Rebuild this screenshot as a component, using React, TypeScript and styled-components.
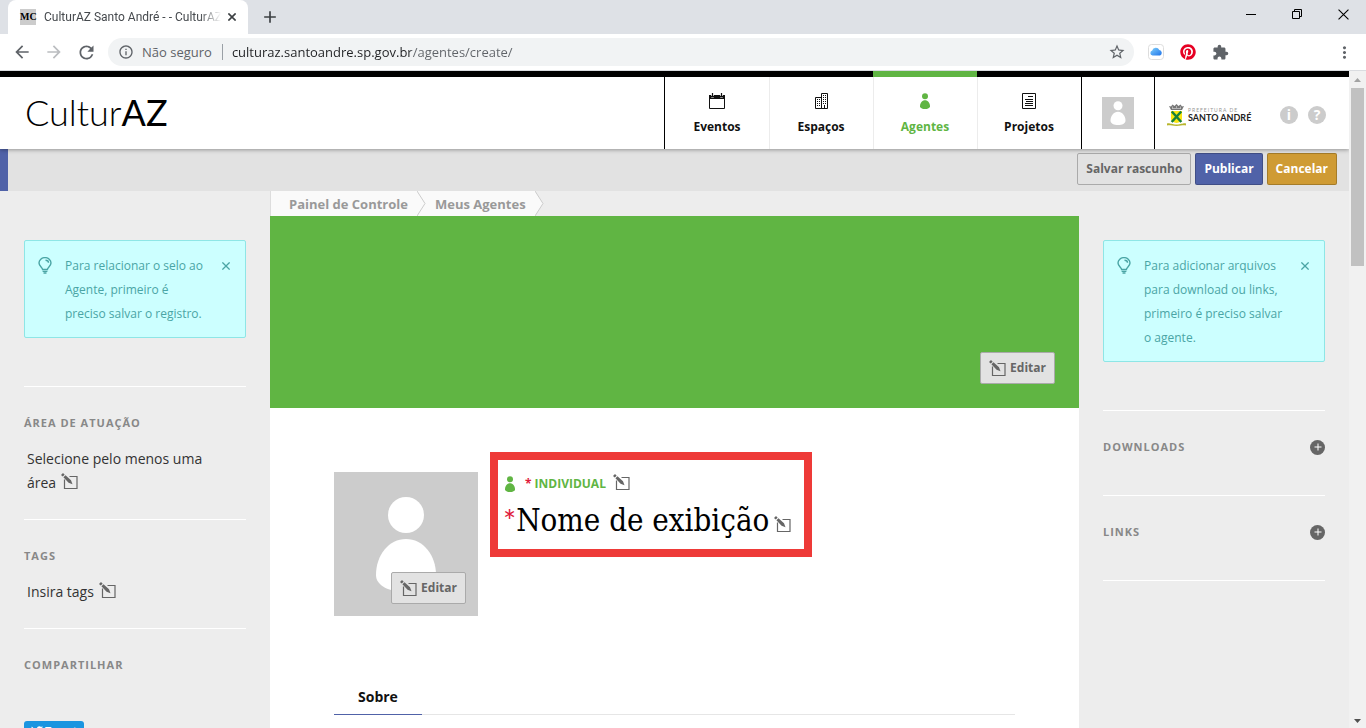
import React from "react";
import styled, { createGlobalStyle } from "styled-components";
import {
  MdArrowBack,
  MdArrowForward,
  MdRefresh,
  MdInfoOutline,
  MdStarBorder,
  MdExtension,
  MdMoreVert,
  MdAdd,
} from "react-icons/md";
import { FaPinterest, FaTwitter } from "react-icons/fa";

const GlobalStyle = createGlobalStyle`
  *, *::before, *::after { box-sizing: border-box; }
  body { margin: 0; background: #ededed; font-family: "Open Sans", sans-serif; font-size: 14px; line-height: 24px; color: #333; }
  h1, h2, p { margin: 0; font-weight: inherit; }
  button, input { font: inherit; color: inherit; margin: 0; padding: 0; border: 0; background: none; }
  a { color: inherit; text-decoration: none; }
  svg { display: block; flex: none; }
`;

/* ---------- browser window ---------- */

const Window = styled.div`
  display: flex;
  flex-direction: column;
  height: 100vh;
  overflow: hidden;
`;

const TabStrip = styled.div`
  display: flex;
  align-items: stretch;
  flex: none;
  height: 34px;
  padding-left: 8px;
  background: #dee1e6;
`;

const BrowserTab = styled.div`
  display: flex;
  align-items: center;
  width: 240px;
  padding: 0 5px 0 12px;
  border-radius: 8px 8px 0 0;
  background: #fff;
  color: #45494d;
  font-family: Roboto, sans-serif;
  font-size: 12px;
`;

const Favicon = styled.span`
  width: 16px;
  margin-right: 8px;
  background: #ccc;
  color: #000;
  font: bold 10px/16px "Liberation Serif", serif;
  text-align: center;
`;

const TabTitle = styled.span`
  flex: 1;
  min-width: 0;
  overflow: hidden;
  white-space: nowrap;
  mask-image: linear-gradient(to right, #000 88%, transparent);
`;

const IconButton = styled.button<{ $w?: number; $color?: string }>`
  display: flex;
  align-items: center;
  justify-content: center;
  flex: none;
  width: ${(p) => p.$w ?? 32}px;
  color: ${(p) => p.$color ?? "#5f6368"};
`;

const MenuButton = styled(IconButton)`
  margin-left: 92px;
`;

const WindowButtons = styled.div`
  display: flex;
  margin-left: auto;
  padding-bottom: 6px;
`;

const Toolbar = styled.div`
  display: flex;
  align-items: center;
  flex: none;
  height: 37px;
  padding: 0 6px;
  border-bottom: 1px solid #dadce0;
  background: #fff;
`;

const AddressBar = styled.div`
  display: flex;
  align-items: center;
  flex: 1;
  height: 28px;
  margin: 0 6px;
  padding: 0 8px 0 10px;
  border-radius: 14px;
  background: #f1f3f4;
  color: #5f6368;
`;

const Insecure = styled.span`
  margin: 0 9px 0 8px;
  padding-right: 10px;
  border-right: 1px solid #9aa0a6;
  font-size: 13px;
  line-height: 16px;
`;

const AddressInput = styled.input`
  flex: 1;
  min-width: 0;
  outline: none;
  background: linear-gradient(to right, #202124 179px, #5f6368 179px);
  background-clip: text;
  -webkit-text-fill-color: transparent;
  font-size: 13px;
`;

const Viewport = styled.div`
  display: flex;
  flex: 1;
  min-height: 0;
`;

const Page = styled.div`
  display: flex;
  flex-direction: column;
  flex: 1;
  min-width: 0;
  overflow: hidden;
`;

const Scrollbar = styled.div`
  display: flex;
  flex-direction: column;
  align-items: center;
  flex: none;
  width: 17px;
  padding: 7px 0 5px;
  background: #f1f1f1;
`;

const Thumb = styled.div`
  width: 13px;
  height: 178px;
  margin: 6px 0 auto;
  background: #c1c1c1;
`;

/* ---------- site header ---------- */

const Header = styled.header`
  display: flex;
  flex: none;
  height: 78px;
  border-top: 6px solid #000;
  background: #fff;
  box-shadow: 0 1px 4px rgba(0, 0, 0, 0.35);
  position: relative;
`;

const SiteLogo = styled.a`
  padding-left: 25px;
  color: #000;
  font: 300 36px/70px Lato, sans-serif;
  b { font-weight: 400; }
`;

const Nav = styled.nav`
  display: flex;
  margin-left: auto;
  border-left: 1px solid #000;
`;

const NavItem = styled.a<{ $active?: boolean }>`
  display: flex;
  flex-direction: column;
  align-items: center;
  width: 104px;
  margin-top: -6px;
  padding-top: 16px;
  border-top: 6px solid ${(p) => (p.$active ? "#60b543" : "#000")};
  color: ${(p) => (p.$active ? "#60b543" : "#111")};
  font-size: 12px;
  font-weight: 700;
  & + & { box-shadow: inset 1px 0 #ececec; }
  svg { margin-bottom: 6px; }
`;

const UserCell = styled.a`
  display: flex;
  align-items: center;
  justify-content: center;
  width: 74px;
  border: solid #000;
  border-width: 0 1px;
`;

const UserPicture = styled.span`
  padding: 4px;
  background: #ccc;
  color: #fff;
`;

const Partner = styled.div`
  display: flex;
  align-items: center;
  width: 194px;
  padding: 3px 23px 0 12px;
`;

const CityName = styled.a`
  flex: 1;
  margin-left: 2px;
  color: #222;
  font: 700 9px/10px Lato, sans-serif;
  white-space: nowrap;
  small {
    display: block;
    color: #999;
    font-size: 5px;
    font-weight: 400;
    line-height: 6px;
    letter-spacing: 1px;
  }
`;

const HelpDot = styled.button`
  width: 18px;
  height: 18px;
  margin-left: 10px;
  border-radius: 50%;
  background: #ccc;
  color: #fff;
  font-size: 14px;
  font-weight: 700;
  line-height: 18px;
`;

const ActionBar = styled.div`
  display: flex;
  justify-content: flex-end;
  gap: 4px;
  flex: none;
  height: 42px;
  padding: 4px 12px 0 0;
  border-left: 8px solid #5062a8;
  background: #e2e2e2;
`;

const Button = styled.button<{ $kind?: "primary" | "warning" }>`
  display: flex;
  align-items: center;
  gap: 4px;
  height: 32px;
  padding: 0 8px;
  border: 1px solid ${(p) => (p.$kind ? "rgba(0, 0, 0, 0.2)" : "#aaa")};
  border-radius: 2px;
  background: ${(p) =>
    p.$kind === "primary" ? "#5062a8" : p.$kind === "warning" ? "#cf9b34" : "#e2e2e2"};
  color: ${(p) => (p.$kind ? "#fff" : "#666")};
  font-size: 12px;
  font-weight: 700;
  white-space: nowrap;
`;

/* ---------- page body ---------- */

const Columns = styled.div`
  display: grid;
  grid-template-columns: 270px minmax(0, 1fr) 270px;
  flex: 1;
  min-height: 0;
`;

const Sidebar = styled.aside`
  padding: 49px 24px 0;
`;

const Alert = styled.div`
  display: flex;
  align-items: flex-start;
  margin-bottom: 48px;
  padding: 13px 15px 11px 13px;
  border: 1px solid #8ee6e6;
  border-radius: 2px;
  background: #cff;
  color: #4aa5a5;
  font-size: 12px;
  p { flex: 1; margin: 0 12px 0 13px; }
  svg { margin-top: 3px; }
`;

const AlertClose = styled.button`
  display: flex;
  height: 24px;
  align-items: center;
  svg { margin: 0; }
`;

const Widget = styled.section<{ $last?: boolean }>`
  padding: 24px 0;
  border-top: 1px solid #fff;
  border-bottom: ${(p) => (p.$last ? "1px solid #fff" : "0")};
`;

const WidgetTitle = styled.h2`
  display: flex;
  align-items: center;
  justify-content: space-between;
  margin-bottom: 12px;
  color: #888;
  font-size: 11px;
  font-weight: 700;
  letter-spacing: 1px;
  text-transform: uppercase;
`;

const AddButton = styled.button`
  display: flex;
  align-items: center;
  justify-content: center;
  width: 15px;
  height: 15px;
  border-radius: 50%;
  background: #666;
  color: #fff;
`;

const Editable = styled.p`
  padding: 0 24px 0 3px;
  font-size: 14px;
  svg { display: inline-block; margin-left: 1px; vertical-align: -2px; color: #666; }
`;

const Tweet = styled.a`
  display: inline-flex;
  align-items: center;
  gap: 2px;
  margin-top: 32px;
  padding: 0 7px;
  border-radius: 3px;
  background: #1b95e0;
  color: #fff;
  font-size: 11px;
  font-weight: 600;
  line-height: 20px;
`;

const Center = styled.main`
  display: flex;
  flex-direction: column;
`;

const Breadcrumb = styled.nav`
  display: flex;
  height: 25px;
  border-left: 1px solid #ddd;
  color: #999;
  font-size: 13px;
  font-weight: 700;
  line-height: 26px;
`;

const Crumb = styled.a`
  display: flex;
  white-space: nowrap;
  span { padding: 0 9px; background: #fafafa; }
  &:first-child span { padding-left: 18px; }
  &:not(:last-child) svg { background: #fafafa; }
`;

const Banner = styled.div`
  display: flex;
  align-items: flex-end;
  justify-content: flex-end;
  flex: none;
  height: 192px;
  padding: 24px;
  background: #60b543;
`;

const Profile = styled.div`
  flex: 1;
  padding: 44px 64px 0;
  background: #fff;
`;

const ProfileHead = styled.div`
  display: flex;
  align-items: flex-start;
  gap: 12px;
`;

const Avatar = styled.div`
  position: relative;
  display: flex;
  justify-content: center;
  width: 144px;
  height: 144px;
  margin-top: 20px;
  padding-top: 24px;
  background: #ccc;
  color: #fff;
  button { position: absolute; right: 12px; bottom: 12px; }
`;

const NameBox = styled.div`
  height: 105px;
  padding: 12px 13px 0 5px;
  border: 8px solid #ee3a38;
`;

const AgentType = styled.div`
  display: flex;
  align-items: center;
  height: 24px;
  color: #60b543;
  font-size: 12px;
  font-weight: 700;
  svg:first-child { margin-left: -1px; }
  em { margin: 0 3px 0 7px; color: #e01b3c; font-style: normal; }
  button { margin: 0 0 4px 8px; }
`;

const DisplayName = styled.h1`
  display: flex;
  align-items: center;
  color: #000;
  font: 400 31px/48px "DejaVu Serif Condensed", "DejaVu Serif", serif;
  font-stretch: condensed;
  white-space: nowrap;
  em { color: #e01b3c; font-style: normal; font-family: Lato, sans-serif; font-weight: 400; }
  button { margin: 8px 0 0 5px; }
`;

const Tabs = styled.div`
  display: flex;
  margin-top: 62px;
  border-bottom: 1px solid #e6e6e6;
`;

const Tab = styled.button`
  margin-bottom: -1px;
  padding: 2px 24px 0;
  border-bottom: 1px solid #5062a8;
  color: #111;
  font-size: 14px;
  font-weight: 700;
  line-height: 34px;
`;

/* ---------- drawings ---------- */

const EditIcon = () => (
  <svg width="17" height="17" viewBox="0 0 17 17" fill="currentColor">
    <path d="M8.500 3.500h7.500v12H3.500V6.500" fill="none" stroke="currentColor" strokeWidth="1.200" />
    <path d="M0 1.900L2 0l1.700 1.700L1.700 3.600zM2.400 4.300l2.100-2L10 7.300l1.500 3.900-3.900-1.500z" />
  </svg>
);

const PersonIcon = ({ size }: { size: number }) => (
  <svg width={size} height={size} viewBox="0 0 96 96" fill="currentColor">
    <circle cx="48" cy="19" r="18" />
    <path d="M48 43c17 0 30 16 30 36 0 11-14 17-30 17S18 90 18 79c0-20 13-36 30-36z" />
  </svg>
);

const CalendarIcon = () => (
  <svg width="16" height="16" viewBox="0 0 16 16" fill="none" stroke="currentColor">
    <path d="M.5 3.500h15v12H.5z" />
    <path d="M0 2h2.200v2.500h2.600V2h6.400v2.500h2.600V2H16v4H0z" fill="currentColor" stroke="none" />
    <path d="M3.500 0v3.500M12.500 0v3.500" strokeWidth="1.200" />
  </svg>
);

const BuildingIcon = () => (
  <svg width="16" height="16" viewBox="0 0 16 16" fill="none" stroke="currentColor">
    <path d="M2.500 4.500h6v11h-6zM8.500 .5h6v15h-6z" />
    <path d="M4 6.500h1M6 6.500h1M4 8.500h1M6 8.500h1M4 10.500h1M6 10.500h1M4 12.500h1M6 12.500h1M10 2.500h1M12 2.500h1M10 4.500h1M12 4.500h1M10 6.500h1M12 6.500h1M10 8.500h1M12 8.500h1M10 10.500h1M12 10.500h1M11.500 12v3.500" />
  </svg>
);

const ListIcon = () => (
  <svg width="16" height="16" viewBox="0 0 16 16" fill="none" stroke="currentColor">
    <path d="M1.500 .5h13v15h-13zM7 3.500h5M4 6.500h8M5 8.500h7M4 10.500h8M4 12.500h8" />
  </svg>
);

const BulbIcon = () => (
  <svg width="14" height="17" viewBox="0 0 14 17" fill="none" stroke="currentColor" strokeWidth="1.400">
    <path d="M4.600 12.500C4.600 10.400 1 9.200 1 6a5.900 5.300 0 0 1 12 0c0 3.200-3.600 4.400-3.600 6.500z" />
    <path d="M4.600 14.400h4.800M5.500 16h3M7.500 3.200c1.700 0 3 1.100 3 2.600" />
  </svg>
);

const CrumbArrow = () => (
  <svg width="9" height="25" viewBox="0 0 9 25">
    <path d="M0 0L8 12.500 0 25z" fill="#fafafa" />
    <path d="M0 0L8 12.500 0 25" fill="none" stroke="#ccc" />
  </svg>
);

const CloudIcon = () => (
  <svg width="16" height="16" viewBox="0 0 16 16">
    <defs>
      <linearGradient id="cloud" x1="0" y1="0" x2="1" y2="1">
        <stop offset="0" stopColor="#7fd0fc" />
        <stop offset="1" stopColor="#1f74ea" />
      </linearGradient>
    </defs>
    <rect x=".5" y=".5" width="15" height="15" rx="3" fill="#fff" stroke="#ddd" />
    <path d="M4.500 11.500a2.500 2.500 0 0 1-.3-4.900 3.800 3.800 0 0 1 7.100-.6 2.900 2.900 0 0 1 .8 5.500z" fill="url(#cloud)" />
  </svg>
);

const Crest = () => (
  <svg width="19" height="22" viewBox="0 0 19 22">
    <path d="M2 2l2 .5L5.500 .5 7.500 2l2-2 2 2 2-1.500L15 2.500l2-.5-2 4H4z" fill="#777" />
    <path d="M5 4.500h9M5.500 2.500v2M9.500 2v2M13.500 2.500v2" stroke="#ddd" strokeWidth=".6" />
    <path d="M4 7h11v8c0 2-2.500 3.500-5.500 4C6.500 18.500 4 17 4 15z" fill="#fbe613" />
    <path d="M4.800 7.500l9.500 10.500M14.200 7.500L4.700 18" stroke="#16813b" strokeWidth="2.500" />
    <path d="M0 19.500c3-.8 4 1 9.500 1s6.500-1.800 9.500-1v2c-3-.5-5 .4-9.500.4S3 21 0 21.500z" fill="#b8b52c" />
  </svg>
);

const MinimizeIcon = () => (
  <svg width="10" height="10" viewBox="0 0 10 10" stroke="#000"><path d="M0 5.500h10" /></svg>
);
const RestoreIcon = () => (
  <svg width="10" height="10" viewBox="0 0 10 10" fill="none" stroke="#000">
    <path d="M.5 2.500h7v7h-7zM2.500 2.500v-2h7v7h-2" />
  </svg>
);
const CrossIcon = ({ size, weight = 1 }: { size: number; weight?: number }) => (
  <svg width={size} height={size} viewBox="0 0 10 10" fill="none" stroke="currentColor" strokeWidth={weight}>
    <path d="M.5 .5l9 9M9.500 .5l-9 9" />
  </svg>
);

const EditButton = () => (
  <Button type="button"><EditIcon />Editar</Button>
);

const Tip = ({ children }: { children: React.ReactNode }) => (
  <Alert role="note">
    <BulbIcon />
    <p>{children}</p>
    <AlertClose type="button" aria-label="Fechar"><CrossIcon size={8} weight={1.6} /></AlertClose>
  </Alert>
);

export default function App() {
  return (
    <Window>
      <GlobalStyle />
      <TabStrip>
        <BrowserTab>
          <Favicon>MC</Favicon>
          <TabTitle>CulturAZ Santo André - - CulturAZ</TabTitle>
          <IconButton type="button" aria-label="Fechar guia" $w={22} $color="#3c4043"><CrossIcon size={8} weight={2} /></IconButton>
        </BrowserTab>
        <IconButton type="button" aria-label="Nova guia" $w={44} $color="#3c4043"><MdAdd size={20} /></IconButton>
        <WindowButtons>
          <IconButton type="button" aria-label="Minimizar" $w={46}><MinimizeIcon /></IconButton>
          <IconButton type="button" aria-label="Restaurar" $w={46}><RestoreIcon /></IconButton>
          <IconButton type="button" aria-label="Fechar" $w={46} $color="#000"><CrossIcon size={11} /></IconButton>
        </WindowButtons>
      </TabStrip>
      <Toolbar>
        <IconButton type="button" aria-label="Voltar"><MdArrowBack size={20} /></IconButton>
        <IconButton type="button" aria-label="Avançar" $color="#bbbdc0"><MdArrowForward size={20} /></IconButton>
        <IconButton type="button" aria-label="Recarregar"><MdRefresh size={21} /></IconButton>
        <AddressBar>
          <MdInfoOutline size={16} />
          <Insecure>Não seguro</Insecure>
          <AddressInput aria-label="Endereço" defaultValue="culturaz.santoandre.sp.gov.br/agentes/create/" />
          <MdStarBorder size={18} />
        </AddressBar>
        <IconButton type="button" aria-label="iCloud"><CloudIcon /></IconButton>
        <IconButton type="button" aria-label="Pinterest" $color="#e60023"><FaPinterest size={16} /></IconButton>
        <IconButton type="button" aria-label="Extensões"><MdExtension size={17} /></IconButton>
        <MenuButton type="button" aria-label="Menu"><MdMoreVert size={19} /></MenuButton>
      </Toolbar>
      <Viewport>
        <Page>
          <Header>
            <SiteLogo href="#">Cultur<b>AZ</b></SiteLogo>
            <Nav>
              <NavItem href="#"><CalendarIcon />Eventos</NavItem>
              <NavItem href="#"><BuildingIcon />Espaços</NavItem>
              <NavItem href="#" $active><PersonIcon size={16} />Agentes</NavItem>
              <NavItem href="#"><ListIcon />Projetos</NavItem>
            </Nav>
            <UserCell href="#" aria-label="Minha conta">
              <UserPicture><PersonIcon size={24} /></UserPicture>
            </UserCell>
            <Partner>
              <Crest />
              <CityName href="#"><small>PREFEITURA DE</small>SANTO ANDRÉ</CityName>
              <HelpDot type="button">i</HelpDot>
              <HelpDot type="button">?</HelpDot>
            </Partner>
          </Header>
          <ActionBar>
            <Button type="button">Salvar rascunho</Button>
            <Button type="button" $kind="primary">Publicar</Button>
            <Button type="button" $kind="warning">Cancelar</Button>
          </ActionBar>
          <Columns>
            <Sidebar>
              <Tip>Para relacionar o selo ao Agente, primeiro é preciso salvar o registro.</Tip>
              <Widget>
                <WidgetTitle>Área de atuação</WidgetTitle>
                <Editable>Selecione pelo menos uma área <EditIcon /></Editable>
              </Widget>
              <Widget>
                <WidgetTitle>Tags</WidgetTitle>
                <Editable>Insira tags <EditIcon /></Editable>
              </Widget>
              <Widget>
                <WidgetTitle>Compartilhar</WidgetTitle>
                <Tweet href="#"><FaTwitter size={12} />Tweet</Tweet>
              </Widget>
            </Sidebar>
            <Center>
              <Breadcrumb>
                <Crumb href="#"><span>Painel de Controle</span><CrumbArrow /></Crumb>
                <Crumb href="#"><span>Meus Agentes</span><CrumbArrow /></Crumb>
              </Breadcrumb>
              <Banner><EditButton /></Banner>
              <Profile>
                <ProfileHead>
                  <Avatar><PersonIcon size={96} /><EditButton /></Avatar>
                  <NameBox>
                    <AgentType>
                      <PersonIcon size={16} />
                      <em>*</em>INDIVIDUAL
                      <IconButton type="button" aria-label="Editar tipo" $w={17} $color="#666"><EditIcon /></IconButton>
                    </AgentType>
                    <DisplayName>
                      <em>*</em>Nome de exibição
                      <IconButton type="button" aria-label="Editar nome" $w={17} $color="#666"><EditIcon /></IconButton>
                    </DisplayName>
                  </NameBox>
                </ProfileHead>
                <Tabs role="tablist"><Tab type="button" role="tab" aria-selected>Sobre</Tab></Tabs>
              </Profile>
            </Center>
            <Sidebar>
              <Tip>Para adicionar arquivos para download ou links, primeiro é preciso salvar o agente.</Tip>
              <Widget>
                <WidgetTitle>Downloads<AddButton type="button" aria-label="Adicionar download"><MdAdd size={12} /></AddButton></WidgetTitle>
              </Widget>
              <Widget $last>
                <WidgetTitle>Links<AddButton type="button" aria-label="Adicionar link"><MdAdd size={12} /></AddButton></WidgetTitle>
              </Widget>
            </Sidebar>
          </Columns>
        </Page>
        <Scrollbar aria-hidden="true">
          <svg width="7" height="4" viewBox="0 0 7 4"><path d="M0 4L3.500 0 7 4z" fill="#a3a3a3" /></svg>
          <Thumb />
          <svg width="7" height="4" viewBox="0 0 7 4"><path d="M0 0l3.500 4L7 0z" fill="#505050" /></svg>
        </Scrollbar>
      </Viewport>
    </Window>
  );
}
